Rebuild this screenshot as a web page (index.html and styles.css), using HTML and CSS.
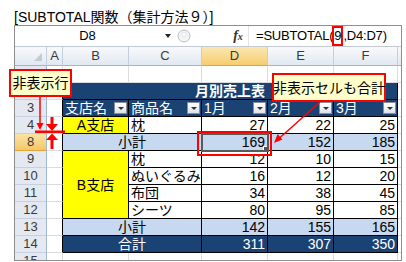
FILE: index.html
```html
<!DOCTYPE html>
<html lang="ja">
<head>
<meta charset="utf-8">
<link rel="stylesheet" href="styles.css">
</head>
<body>
<div class="page">
  <div class="title">[SUBTOTAL関数（集計方法９）]</div>
  <div class="window">
    <div class="fbar">
      <div class="namebox">D8</div>
      <div class="dd"><span class="ddtri"></span></div>
      <div class="knobwrap">
        <svg class="knob" width="14" height="16" viewBox="0 0 14 16"><circle cx="7" cy="8" r="6" fill="#f3f4f6" stroke="#b9bdc4" stroke-width="1"/><circle cx="7" cy="6.5" r="2.3" fill="#fff" stroke="#d0d3d8" stroke-width="0.6"/></svg>
      </div>
      <div class="fx"><i>f</i><i class="x">x</i></div>
      <div class="formula">=SUBTOTAL(<span class="hl">9</span>,D4:D7)</div>
    </div>
    <div class="sheet">
      <div class="ch corner"><span class="ctri"></span></div>
      <div class="ch">A</div><div class="ch">B</div><div class="ch">C</div><div class="ch sel">D</div><div class="ch">E</div><div class="ch">F</div><div class="ch g"></div>

      <div class="rh"></div><div class="c"></div><div class="c"></div><div class="c"></div><div class="c"></div><div class="c"></div><div class="c"></div><div class="c g"></div>

      <div class="rh"></div><div class="c edge"></div><div class="c dk ttl">月別売上表</div><div class="c g"></div>

      <div class="rh">3</div><div class="c edge"></div>
      <div class="c dk fh"><span>支店名</span><span class="fbtn"></span></div>
      <div class="c dk fh"><span>商品名</span><span class="fbtn"></span></div>
      <div class="c dk fh"><span>1月</span><span class="fbtn"></span></div>
      <div class="c dk fh"><span>2月</span><span class="fbtn"></span></div>
      <div class="c dk fh"><span>3月</span><span class="fbtn"></span></div>
      <div class="c g"></div>

      <div class="rh">4</div><div class="c edge"></div><div class="c tb yl ctr">A支店</div><div class="c tb">枕</div><div class="c tb num">27</div><div class="c tb num">22</div><div class="c tb num">25</div><div class="c g"></div>

      <div class="rh sel">8</div><div class="c edge"></div><div class="c tb lb ctr sp2">小計</div><div class="c tb lb num cur">169</div><div class="c tb lb num">152</div><div class="c tb lb num">185</div><div class="c g"></div>

      <div class="rh">9</div><div class="c edge"></div><div class="c tb yl mrg">B支店</div><div class="c tb">枕</div><div class="c tb num">12</div><div class="c tb num">10</div><div class="c tb num">15</div><div class="c g"></div>

      <div class="rh">10</div><div class="c edge"></div><div class="c tb">ぬいぐるみ</div><div class="c tb num">16</div><div class="c tb num">12</div><div class="c tb num">20</div><div class="c g"></div>

      <div class="rh">11</div><div class="c edge"></div><div class="c tb">布団</div><div class="c tb num">34</div><div class="c tb num">38</div><div class="c tb num">45</div><div class="c g"></div>

      <div class="rh">12</div><div class="c edge"></div><div class="c tb">シーツ</div><div class="c tb num">80</div><div class="c tb num">95</div><div class="c tb num">85</div><div class="c g"></div>

      <div class="rh">13</div><div class="c edge"></div><div class="c tb lb ctr sp2">小計</div><div class="c tb lb num">142</div><div class="c tb lb num">155</div><div class="c tb lb num">165</div><div class="c g"></div>

      <div class="rh">14</div><div class="c edge"></div><div class="c tb dk ctr sp2">合計</div><div class="c tb dk num">311</div><div class="c tb dk num">307</div><div class="c tb dk num">350</div><div class="c g"></div>

      <div class="rh">15</div><div class="c"></div><div class="c"></div><div class="c"></div><div class="c"></div><div class="c"></div><div class="c"></div><div class="c g"></div>
    </div>
  </div>

  <div class="callout co1">非表示行</div>
  <div class="callout co2">非表示セルも合計</div>
  <div class="redbox"></div>
  <svg class="arrows" width="406" height="262" viewBox="0 0 406 262">
    <line x1="40" y1="97" x2="40" y2="124" stroke="#ff0000" stroke-width="1.5"/>
    <polygon points="36.5,123 43.5,123 40,130" fill="#ff0000"/>
    <rect x="35" y="130.5" width="30" height="2.5" fill="#ff0000"/>
    <rect x="50.5" y="117" width="3" height="8" fill="#ff0000"/>
    <polygon points="46,124 58,124 52,131" fill="#ff0000"/>
    <polygon points="46,140 58,140 52,133.5" fill="#ff0000"/>
    <rect x="50.5" y="139" width="3" height="10" fill="#ff0000"/>
    <line x1="320" y1="102" x2="279" y2="138.5" stroke="#ff0000" stroke-width="1.5"/>
    <polygon points="274,143 282.3,139.4 277.7,134.1" fill="#ff0000"/>
  </svg>
</div>
</body>
</html>
```
FILE: styles.css
```css
* { box-sizing: border-box; }
html, body { margin: 0; padding: 0; background: #fff; }
body { font-family: "Liberation Sans", "Noto Sans CJK JP", sans-serif; color: #000; }

.page { position: relative; width: 406px; height: 262px; overflow: hidden; }

.title {
  height: 25px;
  padding: 9px 0 0 14px;
  font-size: 14px;
  line-height: 16px;
  white-space: nowrap;
}

.window {
  margin-left: 14px;
  width: 388px;
  height: 236px;
  border: 1px solid #8e8e8e;
  overflow: hidden;
  background: #fff;
}

.fbar {
  display: flex;
  align-items: center;
  height: 21px;
  border-bottom: 1px solid #c3c9d2;
  font-size: 13px;
  line-height: 16px;
}
.namebox { width: 145px; text-align: center; }
.dd { width: 16px; display: flex; justify-content: center; }
.ddtri {
  width: 0; height: 0;
  border-left: 3.5px solid transparent;
  border-right: 3.5px solid transparent;
  border-top: 4px solid #222;
}
.knobwrap { width: 52px; height: 20px; display: flex; align-items: center; padding-left: 1px; }
.fx {
  width: 20px;
  font-family: "Liberation Serif", serif;
  font-size: 14px;
  font-weight: bold;
  color: #333;
  text-align: center;
}
.fx .x { font-size: 10px; }
.formula {
  flex: 1;
  height: 20px;
  padding-left: 7px;
  display: flex;
  align-items: center;
  white-space: nowrap;
  letter-spacing: -0.2px;
  border-left: 1px solid #e2e4e8;
}
.hl {
  display: inline-block;
  border: 2px solid #ff0000;
  height: 20px;
  line-height: 16px;
  margin: 0 0 0 -1px;
  padding: 0;
}

.sheet {
  display: grid;
  grid-template-columns: 32px 16px 66px 73px 66px 66px 64px 1fr;
  grid-template-rows: 19px repeat(14, 17px);
  font-size: 14px;
  line-height: 16px;
}

.ch {
  background: linear-gradient(#f8fafc, #e2e8f1);
  border-right: 1px solid #c5cfdc;
  border-bottom: 1px solid #9eb6ce;
  text-align: center;
  font-size: 13px;
  line-height: 18px;
  color: #3a3a3a;
}
.ch.sel { background: linear-gradient(#fbe7b4, #f6cd6e); border-bottom-color: #e2a53b; }
.corner { display: flex; align-items: flex-end; justify-content: flex-end; padding: 0 4px 4px 0; }
.ctri {
  width: 0; height: 0;
  border-left: 8px solid transparent;
  border-bottom: 8px solid #c5cad2;
}
.ch.g { border-right: none; }

.rh {
  background: #e4e9f1;
  border-right: 1px solid #9eb6ce;
  border-bottom: 1px solid #c5d1e0;
  text-align: center;
  font-size: 13px;
  color: #3a3a3a;
}
.rh.sel { background: linear-gradient(#fbe3a6, #f5c767); border-bottom-color: #e2a53b; }

.c {
  border-right: 1px solid #dadcdf;
  border-bottom: 1px solid #dadcdf;
  padding: 0 2px;
  white-space: nowrap;
  overflow: hidden;
}
.c.g { border-right: none; }
.edge { border-right-color: #000; }
.tb { border-right-color: #000; border-bottom-color: #000; }
.dk { background: #1a4272; color: #fff; border-right-color: #000; border-bottom-color: #000; }
.lb { background: #c6d9f0; }
.yl { background: #ffff00; }
.num { text-align: right; }
.ctr { text-align: center; }
.sp2 { grid-column: span 2; }
.ttl { grid-column: span 5; text-align: center; font-weight: bold; }
.mrg {
  grid-row: span 4;
  display: flex;
  align-items: center;
  justify-content: center;
}
.fh {
  display: flex;
  align-items: center;
  justify-content: space-between;
  padding-right: 1px;
}
.fbtn {
  width: 13px;
  height: 12px;
  background: linear-gradient(#ffffff, #dfe3e8);
  border: 1px solid #8a8f96;
  display: flex;
  align-items: center;
  justify-content: center;
}
.fbtn::after {
  content: "";
  width: 0; height: 0;
  border-left: 3px solid transparent;
  border-right: 3px solid transparent;
  border-top: 3px solid #333;
}
.cur {
  position: relative;
  outline: 2px solid #5a5a5a;
  outline-offset: -1px;
}
.cur::after {
  content: "";
  position: absolute;
  right: -3px;
  bottom: -3px;
  width: 5px;
  height: 5px;
  background: #555;
  border: 1px solid #fff;
}

.callout {
  position: absolute;
  border: 2px solid #ff0000;
  background: #ffffcc;
  font-size: 14px;
  line-height: 16px;
  display: flex;
  align-items: center;
  justify-content: center;
  white-space: nowrap;
}
.co1 { left: 9px; top: 69px; width: 63px; height: 28px; }
.co2 { left: 272px; top: 73px; width: 114px; height: 29px; }

.redbox {
  position: absolute;
  left: 197px;
  top: 131px;
  width: 75px;
  height: 25px;
  border: 2px solid #ff0000;
}

.arrows { position: absolute; left: 0; top: 0; pointer-events: none; }
```
